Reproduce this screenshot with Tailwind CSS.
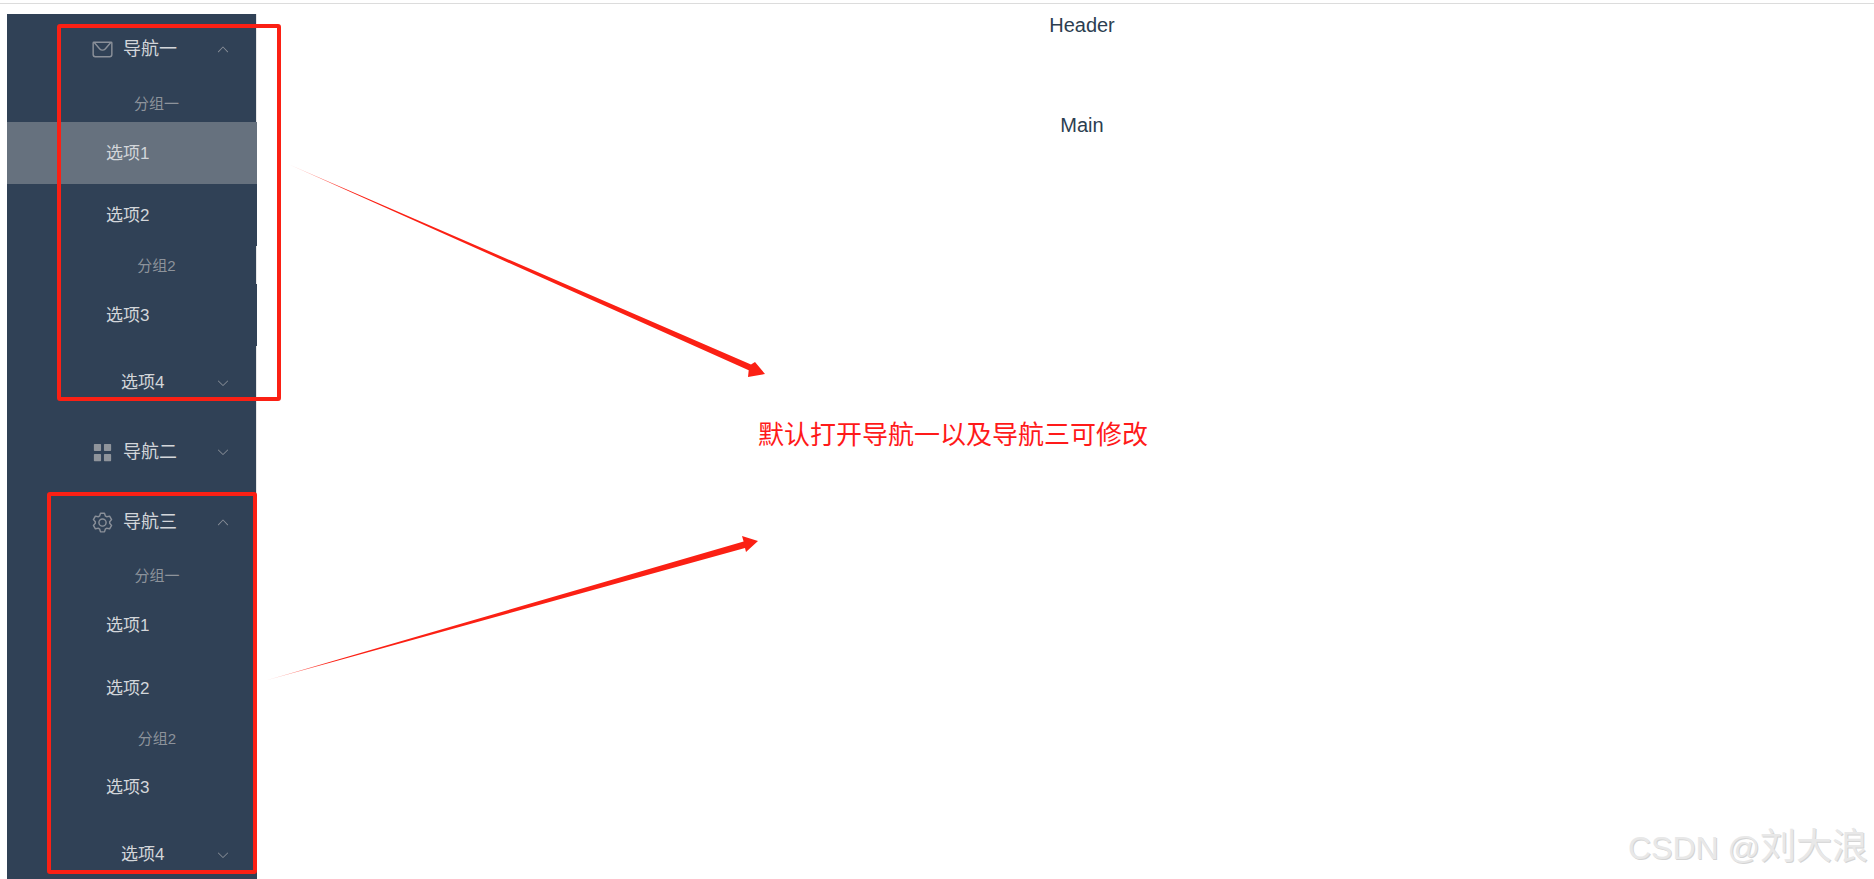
<!DOCTYPE html>
<html lang="zh-CN">
<head>
  <meta charset="UTF-8" />
  <meta name="viewport" content="width=device-width, initial-scale=1" />
  <title>Layout</title>
  <script src="https://cdn.jsdelivr.net/npm/@tailwindcss/browser@4"></script>
</head>
<body class="relative h-[879px] overflow-hidden bg-white font-['Liberation_Sans','Noto_Sans_CJK_SC',sans-serif]">
  <div class="mt-[3px] h-px bg-[#dcdcdc]"></div>

  <div class="flex h-[875px] pt-[10px] pl-[7px]">
    <!-- sidebar -->
    <aside class="w-[250px] shrink-0 text-[17px] text-[#d3d6da]">
      <div class="flex h-[68px] items-center border-r border-[#e6e6e6] bg-[#304156] pl-[84px] pr-[26px] pt-[2px]">
        <svg class="mr-[9px] h-[23px] w-[23px] text-[#8a9099]" viewBox="0 0 1024 1024" fill="currentColor"><path d="M128 224v512a64 64 0 0 0 64 64h640a64 64 0 0 0 64-64V224H128zm0-64h768a64 64 0 0 1 64 64v512a128 128 0 0 1-128 128H192A128 128 0 0 1 64 736V224a64 64 0 0 1 64-64z"/><path d="M904 224 656.512 506.88a192 192 0 0 1-289.024 0L120 224h784zm-698.944 0 210.56 240.704a128 128 0 0 0 192.704 0L818.944 224H205.056z"/></svg>
        <span class="text-[18px]">导航一</span>
        <svg class="ml-auto h-[14px] w-[14px] text-[#8a9099]" viewBox="0 0 1024 1024" fill="currentColor"><path d="M488.832 344.32l-339.84 356.672a32 32 0 0 0 0 44.16l.384.384a29.44 29.44 0 0 0 42.688 0l320-335.872 319.872 335.872a29.44 29.44 0 0 0 42.688 0l.384-.384a32 32 0 0 0 0-44.16L535.168 344.32a32 32 0 0 0-46.336 0z"/></svg>
      </div>
      <div class="flex h-[40px] items-center justify-center border-r border-[#e6e6e6] bg-[#304156] pt-[4px] pl-[50px] text-[15px] text-[#8d939b]">分组一</div>
      <div class="flex h-[62px] items-center bg-[#66717e] pl-[99px] pt-[1px]">选项1</div>
      <div class="flex h-[62px] items-center bg-[#304156] pl-[99px] pt-[1px]">选项2</div>
      <div class="flex h-[38px] items-center justify-center border-r border-[#e6e6e6] bg-[#304156] pt-[2px] pl-[50px] text-[15px] text-[#8d939b]">分组2</div>
      <div class="flex h-[62px] items-center bg-[#304156] pl-[99px] pt-[1px]">选项3</div>
      <div class="flex h-[72px] items-center border-r border-[#e6e6e6] bg-[#304156] pl-[114px] pr-[26px] pt-[2px]">
        <span>选项4</span>
        <svg class="ml-auto h-[14px] w-[14px] text-[#8a9099]" viewBox="0 0 1024 1024" fill="currentColor"><path d="M831.872 340.864 512 652.672 192.128 340.864a30.592 30.592 0 0 0-42.752 0 29.12 29.12 0 0 0 0 41.6L489.664 714.24a32 32 0 0 0 44.672 0l340.288-331.712a29.12 29.12 0 0 0 0-41.728 30.592 30.592 0 0 0-42.752 0z"/></svg>
      </div>
      <div class="flex h-[68px] items-center border-r border-[#e6e6e6] bg-[#304156] pl-[84px] pr-[26px]">
        <svg class="mr-[9px] h-[23px] w-[23px] text-[#8f949b]" viewBox="0 0 1024 1024" fill="currentColor"><path d="M160 448a32 32 0 0 1-32-32V160.064a32 32 0 0 1 32-32h256a32 32 0 0 1 32 32V416a32 32 0 0 1-32 32H160zm448 0a32 32 0 0 1-32-32V160.064a32 32 0 0 1 32-32h255.936a32 32 0 0 1 32 32V416a32 32 0 0 1-32 32H608zM160 896a32 32 0 0 1-32-32V608a32 32 0 0 1 32-32h256a32 32 0 0 1 32 32v256a32 32 0 0 1-32 32H160zm448 0a32 32 0 0 1-32-32V608a32 32 0 0 1 32-32h255.936a32 32 0 0 1 32 32v256a32 32 0 0 1-32 32H608z"/></svg>
        <span class="text-[18px]">导航二</span>
        <svg class="ml-auto h-[14px] w-[14px] text-[#8a9099]" viewBox="0 0 1024 1024" fill="currentColor"><path d="M831.872 340.864 512 652.672 192.128 340.864a30.592 30.592 0 0 0-42.752 0 29.12 29.12 0 0 0 0 41.6L489.664 714.24a32 32 0 0 0 44.672 0l340.288-331.712a29.12 29.12 0 0 0 0-41.728 30.592 30.592 0 0 0-42.752 0z"/></svg>
      </div>
      <div class="flex h-[72px] items-center border-r border-[#e6e6e6] bg-[#304156] pl-[84px] pr-[26px]">
        <svg class="mr-[9px] h-[23px] w-[23px] text-[#8a9099]" viewBox="0 0 1024 1024" fill="currentColor"><path d="M600.704 64a32 32 0 0 1 30.464 22.208l35.2 109.376c14.784 7.232 28.928 15.36 42.432 24.512l112.384-24.192a32 32 0 0 1 34.432 15.36L944.32 364.8a32 32 0 0 1-4.032 37.504l-77.12 85.12a357.12 357.12 0 0 1 0 49.024l77.12 85.248a32 32 0 0 1 4.032 37.504l-88.704 153.6a32 32 0 0 1-34.432 15.296L708.8 803.904c-13.44 9.088-27.648 17.28-42.368 24.512l-35.264 109.376A32 32 0 0 1 600.704 960H423.296a32 32 0 0 1-30.464-22.208L357.696 828.48a351.616 351.616 0 0 1-42.56-24.64l-112.32 24.256a32 32 0 0 1-34.432-15.36L79.68 659.2a32 32 0 0 1 4.032-37.504l77.12-85.248a357.12 357.12 0 0 1 0-48.896l-77.12-85.248A32 32 0 0 1 79.68 364.8l88.704-153.6a32 32 0 0 1 34.432-15.296l112.32 24.256c13.568-9.152 27.776-17.408 42.56-24.64l35.2-109.312A32 32 0 0 1 423.232 64H600.64zm-23.424 64H446.72l-36.352 113.088-24.512 11.968a294.113 294.113 0 0 0-34.816 20.096l-22.656 15.36-116.224-25.088-65.28 113.152 79.68 88.192-1.92 27.136a293.12 293.12 0 0 0 0 40.192l1.92 27.136-79.808 88.192 65.344 113.152 116.224-25.024 22.656 15.296a294.113 294.113 0 0 0 34.816 20.096l24.512 11.968L446.72 896h130.688l36.48-113.152 24.448-11.904a288.282 288.282 0 0 0 34.752-20.096l22.592-15.296 116.288 25.024 65.28-113.152-79.744-88.192 1.92-27.136a293.12 293.12 0 0 0 0-40.256l-1.92-27.136 79.808-88.128-65.344-113.152-116.288 24.96-22.592-15.232a287.616 287.616 0 0 0-34.752-20.096l-24.448-11.904L577.344 128zM512 320a192 192 0 1 1 0 384 192 192 0 0 1 0-384zm0 64a128 128 0 1 0 0 256 128 128 0 0 0 0-256z"/></svg>
        <span class="text-[18px]">导航三</span>
        <svg class="ml-auto h-[14px] w-[14px] text-[#8a9099]" viewBox="0 0 1024 1024" fill="currentColor"><path d="M488.832 344.32l-339.84 356.672a32 32 0 0 0 0 44.16l.384.384a29.44 29.44 0 0 0 42.688 0l320-335.872 319.872 335.872a29.44 29.44 0 0 0 42.688 0l.384-.384a32 32 0 0 0 0-44.16L535.168 344.32a32 32 0 0 0-46.336 0z"/></svg>
      </div>
      <div class="flex h-[36px] items-center justify-center bg-[#304156] pt-[1px] pl-[50px] text-[15px] text-[#8d939b]">分组一</div>
      <div class="flex h-[62px] items-center bg-[#304156] pl-[99px] pt-[1px]">选项1</div>
      <div class="flex h-[63px] items-center bg-[#304156] pl-[99px] pt-[2px]">选项2</div>
      <div class="flex h-[38px] items-center justify-center bg-[#304156] pt-[2px] pl-[50px] text-[15px] text-[#8d939b]">分组2</div>
      <div class="flex h-[62px] items-center bg-[#304156] pl-[99px]">选项3</div>
      <div class="flex h-[68px] items-center bg-[#304156] pl-[114px] pr-[27px] pt-[3px]">
        <span>选项4</span>
        <svg class="ml-auto h-[14px] w-[14px] text-[#8a9099]" viewBox="0 0 1024 1024" fill="currentColor"><path d="M831.872 340.864 512 652.672 192.128 340.864a30.592 30.592 0 0 0-42.752 0 29.12 29.12 0 0 0 0 41.6L489.664 714.24a32 32 0 0 0 44.672 0l340.288-331.712a29.12 29.12 0 0 0 0-41.728 30.592 30.592 0 0 0-42.752 0z"/></svg>
      </div>
    </aside>

    <!-- content -->
    <div class="-mt-[10px] ml-[33px] flex-1 text-center text-[20px] text-[#2c3e50]">
      <header class="pt-[8px] leading-[26px]">Header</header>
      <main class="pt-[74px] leading-[26px]">Main</main>
    </div>
  </div>

  <!-- annotations drawn on the screenshot -->
  <div class="absolute left-[57px] top-[24px] h-[377px] w-[224px] rounded-[3px] border-4 border-[#fb2014]"></div>
  <div class="absolute left-[47px] top-[492px] h-[382px] w-[210px] rounded-[3px] border-4 border-[#fb2014]"></div>

  <svg class="absolute left-0 top-0" width="1874" height="879">
    <defs>
      <linearGradient id="fadeA" gradientUnits="userSpaceOnUse" x1="288" y1="164" x2="350" y2="191">
        <stop offset="0" stop-color="#fb2014" stop-opacity="0.25" />
        <stop offset="1" stop-color="#fb2014" />
      </linearGradient>
      <linearGradient id="fadeB" gradientUnits="userSpaceOnUse" x1="264" y1="681" x2="330" y2="662">
        <stop offset="0" stop-color="#fb2014" stop-opacity="0.25" />
        <stop offset="1" stop-color="#fb2014" />
      </linearGradient>
    </defs>
    <polygon fill="url(#fadeA)" points="288,164 751,364.6 755,362 765,374 748,377 748.7,370.3" />
    <polygon fill="url(#fadeB)" points="264,681 743.6,541.4 742,536 758,541 746,552 745,548" />
  </svg>

  <div class="absolute left-[758px] top-[417px] text-[26px] leading-[36px] text-[#ff1a1a]">默认打开导航一以及导航三可修改</div>

  <div class="absolute right-[6px] top-[826px] text-[32px] leading-[42px] text-[#e8e8e8] [text-shadow:1px_1px_0_#d4d4d4]">CSDN @<span class="text-[36px]">刘大浪</span></div>
</body>
</html>
